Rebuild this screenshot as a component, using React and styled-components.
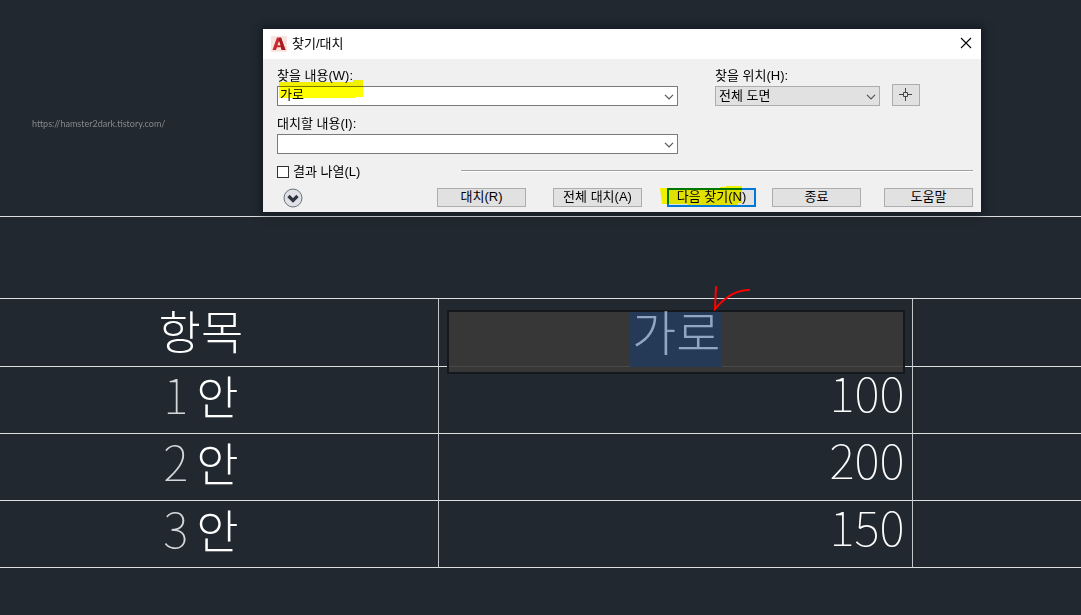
import React, { useState } from "react";
import styled, { createGlobalStyle } from "styled-components";

const GlobalStyle = createGlobalStyle`
  * {
    box-sizing: border-box;
  }
  body {
    margin: 0;
    background: #212830;
    font-family: "Liberation Sans", "Noto Sans CJK KR", sans-serif;
    font-size: 13px;
    color: #000;
  }
  button,
  input,
  select {
    font: inherit;
    color: inherit;
    margin: 0;
  }
`;

const Main = styled.main`
  min-height: 100vh;
  overflow-x: hidden;
`;

const Top = styled.div`
  display: flex;
  align-items: flex-start;
  padding: 29px 100px 4px 32px;
`;

const SourceLink = styled.a`
  flex: 0 0 231px;
  margin-top: 89px;
  font-family: Lato, sans-serif;
  font-size: 9px;
  line-height: 12px;
  color: #85878a;
  text-decoration: none;
`;

const Dialog = styled.section`
  flex: 1;
  background: #f0f0f0;
  box-shadow: 0 0 8px 2px rgba(10, 14, 22, 0.6);
`;

const TitleBar = styled.header`
  display: flex;
  align-items: center;
  height: 30px;
  padding: 0 8px;
  background: #fff;
`;

const Title = styled.h1`
  flex: 1;
  margin: 0 0 0 5px;
  font-size: 13px;
  line-height: 16px;
  font-weight: 400;
`;

const CloseButton = styled.button`
  display: flex;
  padding: 0 1px 2px;
  border: none;
  background: none;
`;

const Body = styled.form`
  padding: 7px 8px 5px 14px;
`;

const Fields = styled.div`
  display: flex;
  align-items: flex-start;
`;

const FieldColumn = styled.div`
  display: flex;
  flex-direction: column;
  gap: 8px;
  flex: ${props => props.$grow};
  margin-right: ${props => props.$after};
`;

const Field = styled.div`
  position: relative;
`;

const Label = styled.label`
  display: block;
  height: 20px;
  line-height: 20px;
`;

const Combo = styled.div`
  display: flex;
  height: 20px;
  border: 1px solid #7a7a7a;
  background: #fff;
`;

const ComboInput = styled.input`
  flex: 1;
  min-width: 0;
  height: 16px;
  padding: 0 2px;
  line-height: 16px;
  border: none;
  outline: none;
  background: none;
`;

const ComboButton = styled.button`
  display: flex;
  align-items: center;
  justify-content: center;
  width: 17px;
  padding: 2px 0 0;
  border: none;
  background: none;
`;

const SelectBox = styled.div`
  display: grid;
  align-items: center;
  height: 20px;
  border: 1px solid #adadad;
  background: #e1e1e1;

  > * {
    grid-area: 1 / 1;
  }
  > svg {
    justify-self: end;
    margin: 2px 3px 0 0;
    pointer-events: none;
  }
`;

const Select = styled.select`
  width: 100%;
  height: 18px;
  padding: 0 3px 2px;
  border: none;
  outline: none;
  background: none;
  appearance: none;
`;

const PickButton = styled.button`
  display: flex;
  align-items: center;
  justify-content: center;
  width: 28px;
  height: 22px;
  margin: 18px 53px 0 0;
  padding: 0 1px 1px 0;
  border: 1px solid #adadad;
  background: #e1e1e1;
`;

const Options = styled.div`
  display: flex;
  align-items: center;
  height: 16px;
  margin: 10px 0 8px;
`;

const CheckLabel = styled.label`
  display: flex;
  align-items: center;
  gap: 4px;
  flex: 0 0 184px;
  line-height: 16px;
`;

const CheckBox = styled.input`
  width: 12px;
  height: 12px;
  border: 1px solid #333;
  background: #fff;
  appearance: none;

  &:checked {
    background: #333;
  }
`;

const Divider = styled.hr`
  flex: 1;
  height: 2px;
  margin: 0 0 2px;
  border: none;
  border-top: 1px solid #a0a0a0;
  border-bottom: 1px solid #fff;
`;

const Actions = styled.div`
  display: flex;
  align-items: center;
  height: 19px;
`;

const ExpandButton = styled.button`
  display: flex;
  margin: 0 auto 0 6px;
  padding: 0;
  border: none;
  background: none;
`;

const ActionButton = styled.button`
  position: relative;
  width: 89px;
  height: 19px;
  margin-left: ${props => props.$before || "0"};
  padding: 0 0 2px;
  line-height: ${props => (props.$primary ? "13px" : "15px")};
  border: ${props => (props.$primary ? "2px solid #0078d7" : "1px solid #adadad")};
  background: #e1e1e1;
`;

/* marker strokes lie over the controls */
const Marker = styled.svg`
  position: absolute;
  left: ${props => props.$left};
  top: ${props => props.$top};
  fill: #ffff00;
  mix-blend-mode: multiply;
  pointer-events: none;
`;

const Sheet = styled.table`
  width: 100%;
  table-layout: fixed;
  border-collapse: separate;
  border-spacing: 0;
  border-top: 1px solid #dcdee0;
`;

const Col = styled.col`
  width: ${props => props.$width};
`;

const TitleCell = styled.td`
  height: 82px;
  border-bottom: 1px solid #dcdee0;
`;

const Cell = styled.td`
  position: relative;
  height: 67px;
  padding: 0 8px 18px 0;
  border-bottom: 1px solid #dcdee0;
  border-right: 1px solid #c4c7ca;
  font-family: "Noto Sans CJK KR", sans-serif;
  font-size: 48px;
  line-height: 48px;
  font-weight: 100;
  text-align: right;
  color: #fff;

  &:last-child {
    border-right: none;
  }
`;

const NameCell = styled(Cell)`
  padding: 0 36px 14px 0;
  text-align: center;
  color: #d5d8db;
`;

const HeadCell = styled(Cell)`
  height: 68px;
  padding: 0 36px 8px 0;
  text-align: center;
`;

const Hangul = styled.span`
  margin-left: ${props => props.$before || "0"};
  font-size: 46px;
  font-weight: 300;
  color: #fff;
`;

const Editor = styled.div`
  position: absolute;
  z-index: 1;
  top: 11px;
  left: 8px;
  right: 7px;
  height: 64px;
  display: flex;
  justify-content: center;
  align-items: flex-start;
  border: 2px solid #14181c;
  background: rgba(58, 57, 57, 0.9);
`;

const Selected = styled.span`
  height: 55px;
  padding: 0 2px;
  line-height: 36px;
  background: #243a57;
  color: #8fa6c4;
  font-weight: 300;
`;

const Tick = styled.svg`
  position: absolute;
  z-index: 2;
  top: -14px;
  right: 161px;
`;

const Chevron = () => (
    <svg width="10" height="6" viewBox="0 0 10 6" fill="none" stroke="#555" strokeWidth="1.2">
        <path d="M1 .8 5 4.8 9 .8" />
    </svg>
);

const ComboField = ({ id, label, value, onChange, children }) => (
    <Field>
        <Label htmlFor={id}>{label}</Label>
        <Combo>
            <ComboInput id={id} type="text" value={value} onChange={onChange} />
            <ComboButton type="button" aria-label={label}>
                <Chevron />
            </ComboButton>
        </Combo>
        {children}
    </Field>
);

const FindDialog = () => {
    const [find, setFind] = useState("가로");
    const [replace, setReplace] = useState("");

    return (
        <Dialog>
            <TitleBar>
                <svg width="16" height="16" viewBox="0 0 16 16">
                    <rect width="16" height="16" fill="#f8e4e0" />
                    <path d="M1.500 14 6 1.500h4L14.500 14h-3.800l-.9-2.700H6L5 14z" fill="#c9282d" />
                    <path d="M10 1.500 14.500 14h-3.800L7.500 3z" fill="#a51c22" />
                    <path d="M8 5 6.500 9.200h3z" fill="#f8e4e0" />
                </svg>
                <Title>찾기/대치</Title>
                <CloseButton type="button" aria-label="닫기">
                    <svg width="12" height="12" viewBox="0 0 12 12" stroke="#000" strokeWidth="1.1">
                        <path d="M1 1 11 11M11 1 1 11" />
                    </svg>
                </CloseButton>
            </TitleBar>
            <Body onSubmit={e => e.preventDefault()}>
                <Fields>
                    <FieldColumn $grow="1" $after="37px">
                        <ComboField
                            id="find"
                            label="찾을 내용(W):"
                            value={find}
                            onChange={e => setFind(e.target.value)}
                        >
                            <Marker $left="2px" $top="14px" width="84" height="18">
                                <path d="M0 2H74V0H84V17H76V18H0z" />
                            </Marker>
                        </ComboField>
                        <ComboField
                            id="replace"
                            label="대치할 내용(I):"
                            value={replace}
                            onChange={e => setReplace(e.target.value)}
                        />
                    </FieldColumn>
                    <FieldColumn $grow="0 0 165px" $after="12px">
                        <Field>
                            <Label htmlFor="where">찾을 위치(H):</Label>
                            <SelectBox>
                                <Select id="where">
                                    <option>전체 도면</option>
                                </Select>
                                <Chevron />
                            </SelectBox>
                        </Field>
                    </FieldColumn>
                    <PickButton type="button" aria-label="객체 선택">
                        <svg width="13" height="13" viewBox="0 0 13 13" fill="none" stroke="#444">
                            <path d="M4.500 4.500h4v4h-4zM6.500 0v4.500M6.500 8.500V13M0 6.500h4.500M8.500 6.500H13" />
                        </svg>
                    </PickButton>
                </Fields>
                <Options>
                    <CheckLabel>
                        <CheckBox type="checkbox" />
                        결과 나열(L)
                    </CheckLabel>
                    <Divider />
                </Options>
                <Actions>
                    <ExpandButton type="button" aria-label="자세히">
                        <svg width="20" height="20" viewBox="0 0 20 20" fill="none">
                            <circle cx="10" cy="10" r="9" fill="#dfe1e6" stroke="#6a707a" />
                            <path d="M5.500 8 10 12.500 14.500 8" stroke="#2f3540" strokeWidth="3.200" />
                        </svg>
                    </ExpandButton>
                    <ActionButton type="button">대치(R)</ActionButton>
                    <ActionButton type="button" $before="27px">전체 대치(A)</ActionButton>
                    <ActionButton type="submit" $before="25px" $primary>
                        다음 찾기(N)
                        <Marker $left="-9px" $top="-4px" width="82" height="19">
                            <path d="M0 2H60V1H66V0H82V17H78V19H28V18H2z" />
                        </Marker>
                    </ActionButton>
                    <ActionButton type="button" $before="16px">종료</ActionButton>
                    <ActionButton type="button" $before="23px">도움말</ActionButton>
                </Actions>
            </Body>
        </Dialog>
    );
};

const rows = [
    { no: "1", value: "100" },
    { no: "2", value: "200" },
    { no: "3", value: "150" }
];

const App = () => (
    <Main>
        <GlobalStyle />
        <Top>
            <SourceLink href="https://hamster2dark.tistory.com/">
                https://hamster2dark.tistory.com/
            </SourceLink>
            <FindDialog />
        </Top>
        <Sheet>
            <colgroup>
                <Col $width="40.6%" />
                <Col $width="43.9%" />
                <Col />
            </colgroup>
            <tbody>
                <tr>
                    <TitleCell colSpan={3} />
                </tr>
                <tr>
                    <HeadCell as="th">
                        <Hangul>항목</Hangul>
                    </HeadCell>
                    <HeadCell as="th">
                        <Editor>
                            <Selected>가로</Selected>
                        </Editor>
                        <Tick width="38" height="26" fill="none" stroke="#f00" strokeWidth="2" strokeLinecap="round">
                            <path d="M3 2 2 24Q18 5 36 5" />
                        </Tick>
                    </HeadCell>
                    <HeadCell />
                </tr>
                {rows.map(row => (
                    <tr key={row.no}>
                        <NameCell>
                            {row.no}
                            <Hangul $before="8px">안</Hangul>
                        </NameCell>
                        <Cell>{row.value}</Cell>
                        <Cell />
                    </tr>
                ))}
            </tbody>
        </Sheet>
    </Main>
);

export default App;
